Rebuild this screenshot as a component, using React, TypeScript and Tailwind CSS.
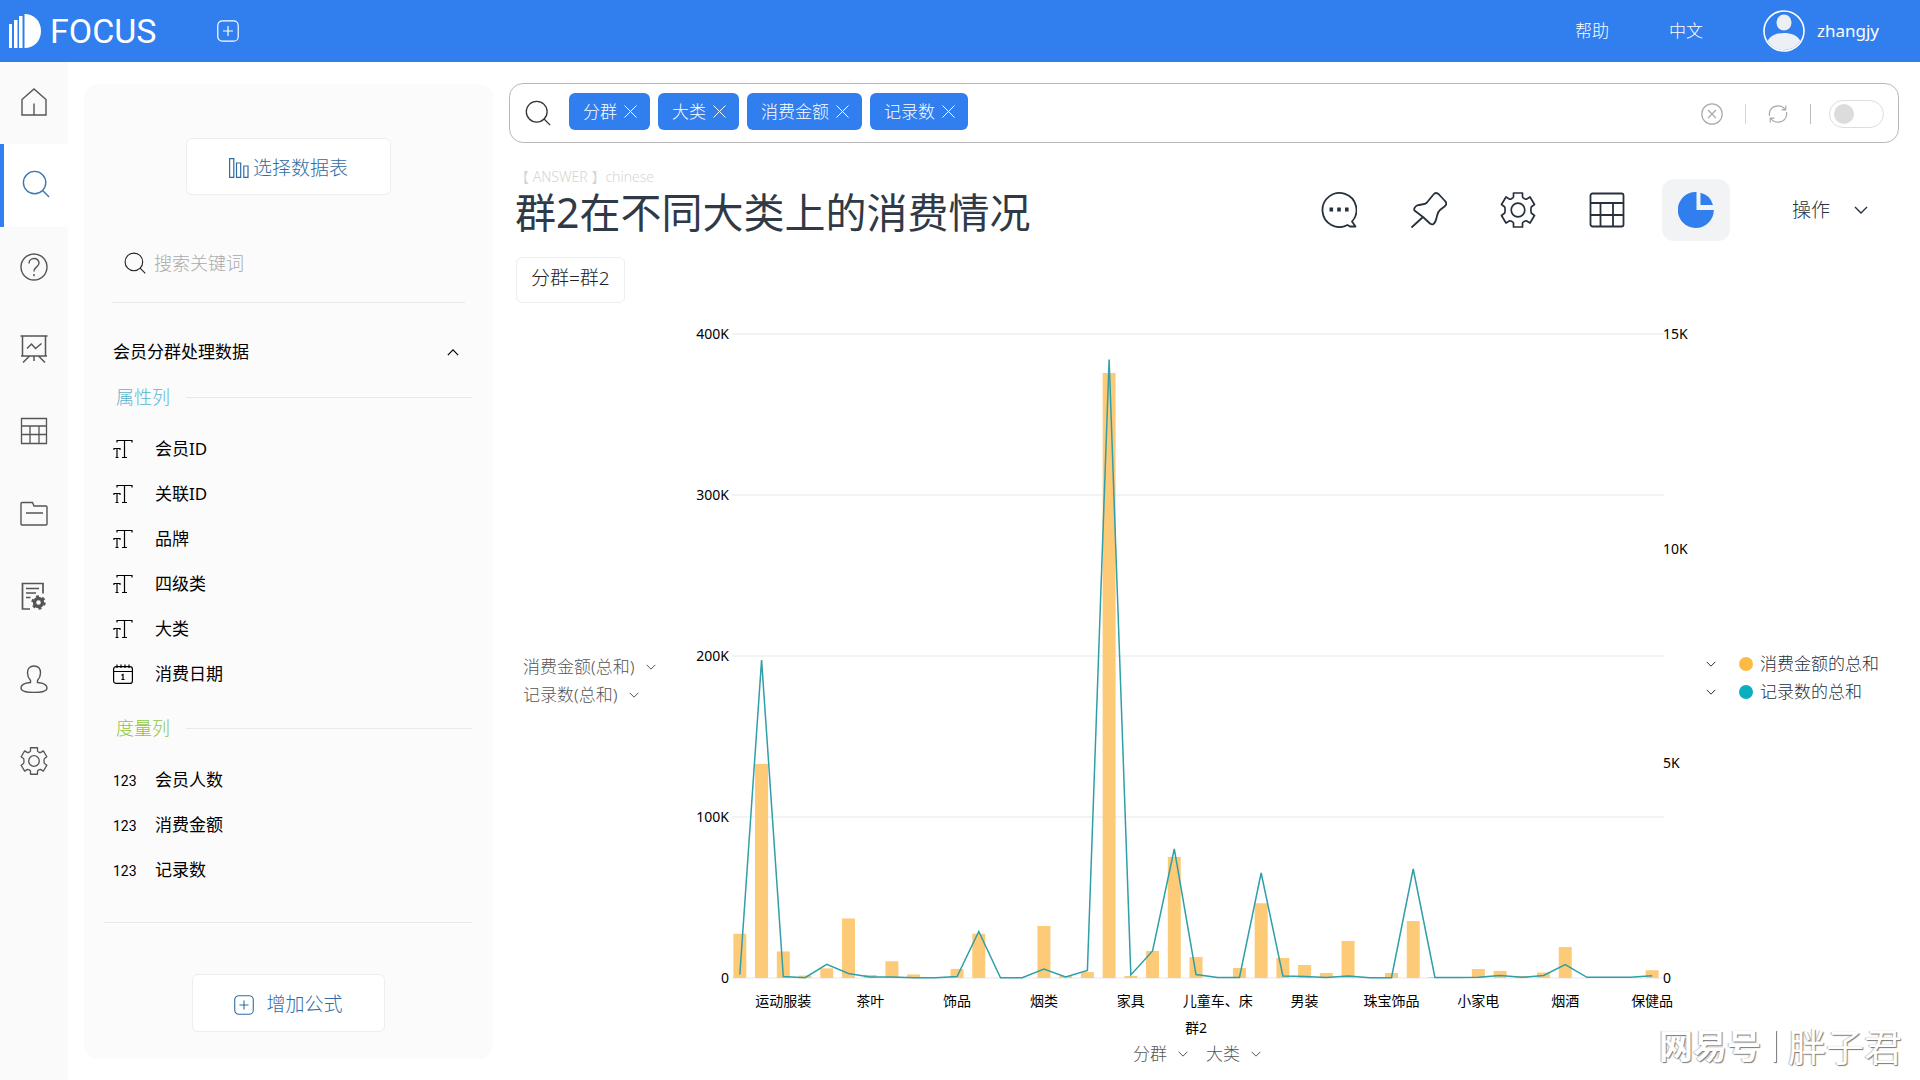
import type { ReactNode } from "react"

type IconProps = { className?: string }

// valores en miles, una barra por categoria
const amounts = [
  27.5, 133, 16.5, 1.5, 6, 37, 1.9, 10.4, 2.2, 0, 5.6, 27.5, 0, 0, 32.3, 1.2, 3.7, 375.8, 1.3, 16.8, 75.2, 13, 0, 6.2,
  46.4, 12.4, 8.1, 3.1, 23, 0, 3.1, 35.4, 0.6, 0, 5.6, 4.4, 1.2, 3.4, 19.2, 0, 0, 0, 4.8,
]
const records = [
  82, 7407, 35, 7, 319, 105, 23, 23, 7, 7, 35, 1083, 7, 7, 210, 23, 175, 14406, 70, 629, 3005, 82, 12, 12, 2446, 46, 35,
  12, 46, 7, 7, 2539, 12, 12, 16, 58, 16, 58, 314, 16, 16, 16, 54,
]
const categories = ["运动服装", "茶叶", "饰品", "烟类", "家具", "儿童车、床", "男装", "珠宝饰品", "小家电", "烟酒", "保健品"]

const attributes = ["会员ID", "关联ID", "品牌", "四级类", "大类"]
const measures = ["会员人数", "消费金额", "记录数"]
const chips = ["分群", "大类", "消费金额", "记录数"]

function SearchIcon({ className }: IconProps) {
  return (
    <svg className={className} viewBox="0 0 30 30" fill="none" stroke="currentColor" strokeWidth="1.5">
      <circle cx="13.5" cy="13.5" r="12" />
      <path d="M22 22l7 7" />
    </svg>
  )
}

function Chevron({ className }: IconProps) {
  return (
    <svg className={className} viewBox="0 0 14 8" fill="none" stroke="currentColor" strokeWidth="1.4">
      <path d="M1 1l6 6 6-6" />
    </svg>
  )
}

function PlusSquare({ className }: IconProps) {
  return (
    <svg className={className} viewBox="0 0 22 22" fill="none" stroke="currentColor" strokeWidth="1.2">
      <rect x="0.8" y="0.8" width="20.4" height="20.4" rx="4.5" />
      <path d="M11 6v10M6 11h10" />
    </svg>
  )
}

function GearIcon({ className }: IconProps) {
  return (
    <svg className={className} viewBox="0 0 36 36" fill="none" stroke="currentColor" strokeWidth="1.7" strokeLinejoin="round">
      <path d="M13.500 1h9v4c0 .8 3 2.500 3.800 2.200l3.700-2.200 4.500 7.500-3 2.200c-.8.600-.8 6 0 6.600l3 2.200-4.500 7.500-3.700-2.200c-.8-.3-3.800 1.400-3.800 2.200v4h-9v-4c0-.8-3-2.500-3.800-2.200L6 31l-4.500-7.500 3-2.200c.8-.6.8-6 0-6.600l-3-2.200L6 5l3.700 2.200c.8.3 3.800-1.400 3.800-2.200z" />
      <circle cx="18" cy="18" r="6.8" />
    </svg>
  )
}

function TextTypeIcon() {
  return (
    <svg className="h-5 w-5" viewBox="0 0 20 20" fill="none" stroke="currentColor" strokeWidth="1.2">
      <path d="M4 3.5v-2h15v2M11.5 1.5v17M9 18.5h5" />
      <path d="M1 11V9.5h6V11M4 9.5v9M2.5 18.5h3" />
    </svg>
  )
}

function CalendarIcon() {
  return (
    <svg className="h-5 w-5" viewBox="0 0 20 20" fill="none" stroke="currentColor" strokeWidth="1.2">
      <rect x="0.6" y="2.6" width="18.800" height="16.800" rx="2.5" />
      <path d="M1 7.500h18M4 0.500v3.500M8 0.500v3.500M12 0.500v3.500M16 0.500v3.500M8.500 11.200l1.500-.8v5M8.500 15.500h3" />
    </svg>
  )
}

const railIcons: { label: string; icon: ReactNode }[] = [
  {
    label: "首页",
    icon: (
      <svg className="h-7 w-7" viewBox="0 0 28 28" fill="none" stroke="currentColor" strokeWidth="1.4">
        <path d="M2 27V11.5L14 1l12 10.5V27zM14 15.5V27" />
      </svg>
    ),
  },
  { label: "搜索", icon: <SearchIcon className="ml-1 h-7 w-7" /> },
  {
    label: "帮助",
    icon: (
      <svg className="h-7 w-7" viewBox="0 0 28 28" fill="none" stroke="currentColor" strokeWidth="1.4">
        <circle cx="14" cy="14" r="13" />
        <path d="M9 10.5c0-6.5 10-6.5 10-.5 0 4-5 3.800-5 8.500M14 21v2.200" />
      </svg>
    ),
  },
  {
    label: "看板",
    icon: (
      <svg className="h-7 w-7" viewBox="0 0 28 28" fill="none" stroke="currentColor" strokeWidth="1.5">
        <path d="M0.500 1h27M2.500 1v20h23V1M1 21h26M9.500 21L3 27.500M18.500 21l6.500 6.500M14 21v5" />
        <path d="M7 13.500l4.500-4.500 4 4.500 6-5" />
      </svg>
    ),
  },
  {
    label: "数据表",
    icon: (
      <svg className="h-7 w-7" viewBox="0 0 28 28" fill="none" stroke="currentColor" strokeWidth="1.3">
        <path d="M1.500 1.500h25v25h-25zM1.500 9h25M1.500 17.500h25M10 9v17.500M19 9v17.500" />
      </svg>
    ),
  },
  {
    label: "文件夹",
    icon: (
      <svg className="h-7 w-7" viewBox="0 0 28 28" fill="none" stroke="currentColor" strokeWidth="1.4">
        <path d="M2 2.500h10.500l1.500 3.500h12q1 0 1 1v17q0 1-1 1H2q-1 0-1-1v-20.500q0-1 1-1zM6 13h17" />
      </svg>
    ),
  },
  {
    label: "任务",
    icon: (
      <svg className="h-7 w-7" viewBox="0 0 28 28" fill="none" stroke="currentColor" strokeWidth="1.7">
        <path d="M10 27H2.500V1.500h20.500v10M6 6.500h13M6 11h10M6 15.500h4.500" />
        <circle cx="18.500" cy="20.500" r="4" strokeWidth="3.4" />
        <circle cx="18.500" cy="20.500" r="6.200" strokeWidth="2" strokeDasharray="3 3.49" />
      </svg>
    ),
  },
  {
    label: "用户",
    icon: (
      <svg className="h-7 w-7" viewBox="0 0 28 28" fill="none" stroke="currentColor" strokeWidth="1.4">
        <path d="M14 1C9.500 1 7.500 4 7.500 8c0 3.500 1.200 5.500 3 7.500v2C5 18 1 20 1 23c0 3 6 4.500 13 4.500S27 26 27 23c0-3-4-5-9.500-5.500v-2c1.800-2 3-4 3-7.500 0-4-2-7-6.500-7z" />
      </svg>
    ),
  },
  { label: "设置", icon: <GearIcon className="h-7 w-7" /> },
]

function Header() {
  return (
    <header className="flex h-[62px] items-center border-b border-[#4479c4] bg-[#317eee] text-white">
      <a href="#" className="flex items-center pl-2">
        <svg className="h-[34px] w-[34px]" viewBox="0 0 34 34" fill="currentColor">
          <path d="M1 10h3v24H1zM6 6h3.500v28H6zM11 2h3.500v32H11z" />
          <path d="M16.500 0C26 0 33 7 33 17s-7 17-16.500 17z" />
        </svg>
        <span className="ml-2 font-[Roboto] text-[34px] leading-[40px]">FOCUS</span>
      </a>
      <button aria-label="新建" className="ml-[60px]">
        <PlusSquare className="h-[22px] w-[22px]" />
      </button>
      <nav className="ml-auto flex items-center pr-[41px] text-[17px] font-light">
        <a href="#">帮助</a>
        <a href="#" className="ml-[60px]">
          中文
        </a>
        <a href="#" className="ml-[60px] flex items-center gap-3 font-normal">
          <svg className="h-[42px] w-[42px]" viewBox="0 0 42 42">
            <circle cx="21" cy="21" r="20" fill="none" stroke="#fff" strokeWidth="1.6" />
            <ellipse cx="21" cy="12.5" rx="7.500" ry="8" fill="#eceff3" />
            <path d="M4.500 31C8 25 14 23 21 23s13 2 16.500 8A19.500 19.500 0 0 1 4.500 31z" fill="#eceff3" />
          </svg>
          zhangjy
        </a>
      </nav>
    </header>
  )
}

function Rail() {
  return (
    <aside className="w-[68px] shrink-0 bg-[#fafafa]">
      <nav className="flex h-[742px] flex-col">
        {railIcons.map((item, i) => (
          <a
            key={item.label}
            href="#"
            aria-label={item.label}
            className={
              i === 1
                ? "flex flex-1 items-center justify-center border-l-4 border-[#317eee] bg-white pr-1 pb-[3px] text-[#3b77b5]"
                : "flex flex-1 items-center justify-center pb-[3px] text-[#555]"
            }
          >
            {item.icon}
          </a>
        ))}
      </nav>
    </aside>
  )
}

function GroupTitle({ text, color }: { text: string; color: string }) {
  return (
    <div className="mr-[21px] ml-8 flex h-12 items-center gap-4">
      <h3 className={`text-[18px] font-light ${color}`}>{text}</h3>
      <div className="flex-1 border-t border-[#e9e9e9]" />
    </div>
  )
}

function Field({ icon, text }: { icon: ReactNode; text: string }) {
  return (
    <li className="flex h-[45px] items-center pl-[29px]">
      <span className="w-[42px]">{icon}</span>
      <span className="text-[17px]">{text}</span>
    </li>
  )
}

function DataPanel() {
  return (
    <section className="mt-[22px] ml-4 flex w-[409px] shrink-0 flex-col self-start rounded-[14px] bg-[#fbfbfb] pt-[54px] pb-[27px] text-black">
      <button className="flex h-[57px] w-[205px] items-center justify-center gap-1 self-center rounded-md border border-[#eee] bg-white pt-[3px] text-[19px] font-light text-[#2f6ca5]">
        <svg className="h-5 w-5" viewBox="0 0 20 20" fill="none" stroke="currentColor" strokeWidth="1.2">
          <path d="M0.600 0.600h4.200v18.800H0.600zM7.500 5h4.200v14.400H7.500zM14.800 8h4.200v11.400h-4.200z" />
        </svg>
        选择数据表
      </button>

      <label className="mx-7 mt-[29px] flex h-[79px] items-center gap-2 border-b border-[#e9e9e9] pl-3">
        <SearchIcon className="h-[22px] w-[22px] text-[#222]" />
        <input
          aria-label="搜索关键词"
          placeholder="搜索关键词"
          className="min-w-0 flex-1 bg-transparent text-[18px] font-light outline-none placeholder:text-[#aaa]"
        />
      </label>

      <button className="mt-7 mr-[34px] ml-[29px] flex h-[42px] items-center justify-between text-[17px]">
        会员分群处理数据
        <Chevron className="h-[7px] w-3 rotate-180" />
      </button>

      <GroupTitle text="属性列" color="text-[#5cb3cc]" />
      <ul className="mt-[5px]">
        {attributes.map((a) => (
          <Field key={a} icon={<TextTypeIcon />} text={a} />
        ))}
        <Field icon={<CalendarIcon />} text="消费日期" />
      </ul>

      <div className="mt-2">
        <GroupTitle text="度量列" color="text-[#8cc540]" />
      </div>
      <ul className="mt-[5px]">
        {measures.map((m) => (
          <Field key={m} icon={<span className="font-[Roboto] text-[14px]">123</span>} text={m} />
        ))}
      </ul>

      <div className="mt-[30px] mr-[21px] ml-5 border-t border-[#e9e9e9]" />
      <button className="mt-[51px] flex h-[58px] w-[193px] items-center justify-center gap-3 self-center rounded-md border border-[#eee] bg-white pt-[3px] text-[19px] font-light text-[#2f6ca5]">
        <PlusSquare className="h-5 w-5" />
        增加公式
      </button>
    </section>
  )
}

function SearchBar() {
  return (
    <div className="flex h-[60px] items-center rounded-[14px] border border-[#b8b8b8] pr-[14px] pl-[15px]">
      <SearchIcon className="h-[26px] w-[26px] text-[#333]" />
      <div className="ml-[18px] flex gap-2 pb-1">
        {chips.map((c) => (
          <span key={c} className="flex h-[37px] items-center gap-[7px] rounded-md bg-[#317eee] pr-[13px] pl-[14px] text-[17px] font-light text-white">
            <span className="pt-[2px]">{c}</span>
            <button aria-label={`移除${c}`}>
              <svg className="h-[13px] w-[13px]" viewBox="0 0 13 13" stroke="currentColor" strokeWidth="1">
                <path d="M0.500 0.500l12 12M12.500 0.500l-12 12" />
              </svg>
            </button>
          </span>
        ))}
      </div>
      <input aria-label="搜索" className="mx-2 h-8 min-w-0 flex-1 outline-none" />
      <div className="flex items-center gap-[22px] pt-[2px] text-[#aaa]">
        <button aria-label="清空">
          <svg className="h-[22px] w-[22px]" viewBox="0 0 22 22" fill="none" stroke="currentColor" strokeWidth="1.2">
            <circle cx="11" cy="11" r="10.200" />
            <path d="M7 7l8 8M15 7l-8 8" />
          </svg>
        </button>
        <span className="h-5 border-l border-[#d5d5d5]" />
        <button aria-label="刷新">
          <svg className="h-5 w-5" viewBox="0 0 20 20" fill="none" stroke="currentColor" strokeWidth="1.2">
            <path d="M1.500 12C0.500 6 4.500 1.800 10 1.800c3 0 5.500 1.200 7 3.700M18.500 8c1 6-3 10.200-8.500 10.200-3 0-5.500-1.200-7-3.700M17.800 1.500v4.300h-4.300M2.200 18.500v-4.300h4.300" />
          </svg>
        </button>
        <span className="h-5 border-l border-[#bbb]" />
        <label className="-ml-1 flex h-7 w-[55px] items-center rounded-full border border-[#ddd] pl-1">
          <input type="checkbox" role="switch" aria-label="切换" className="peer sr-only" />
          <span className="h-5 w-5 rounded-full bg-[#dcdcdc] peer-checked:translate-x-6 peer-checked:bg-[#317eee]" />
        </label>
      </div>
    </div>
  )
}

function Toolbar() {
  return (
    <div className="flex items-center pr-[31px] text-[#26313d]">
      <button aria-label="评论">
        <svg className="h-9 w-9" viewBox="0 0 36 36" fill="none" stroke="currentColor" strokeWidth="1.8">
          <path d="M31 29.500A17 17 0 1 0 26.500 33l2.500 1.500h5.500z" strokeLinejoin="round" />
          <path d="M8.500 17.500h3.600M16.200 17.500h3.600M24 17.500h3.600" strokeWidth="3.8" />
        </svg>
      </button>
      <button aria-label="固定" className="ml-[54px]">
        <svg className="h-9 w-9" viewBox="0 0 36 36" fill="none" stroke="currentColor" strokeWidth="1.8" strokeLinejoin="round" strokeLinecap="round">
          <path d="M1 35l11-10M12 25L3.500 18.500c-1-1.500.5-4 2.500-5 3.500-1.500 7.500-.5 9.500-2.500L22.500 2.500c1.500-2 3.500-2 5.500 0l6 6.500c2 2 1.500 4-.5 5.500L29 18c-2.500 2-2.500 4.500-3.500 8-.6 2.500-1.500 5-3 6-1 .7-2.500.2-3.500-.5z" />
        </svg>
      </button>
      <button aria-label="设置" className="ml-[53px]">
        <GearIcon className="h-9 w-9" />
      </button>
      <button aria-label="表格" className="ml-[53px]">
        <svg className="h-9 w-9" viewBox="0 0 36 36" fill="none" stroke="currentColor" strokeWidth="1.8">
          <rect x="1.500" y="1.500" width="33" height="33" rx="2" />
          <path d="M1.500 11h33M1.500 23h33M11.500 11v23.500M24 11v23.500" />
        </svg>
      </button>
      <button aria-label="图表" className="ml-[37px] flex h-[62px] w-[68px] items-center justify-center rounded-[12px] bg-[#f1f3f4]">
        <svg className="h-9 w-9" viewBox="0 0 36 36" fill="#317eee">
          <path d="M18.500 0.500v17.500h17.300A18 18 0 1 1 18.500 0z" />
          <path d="M22.500 0.800A17 17 0 0 1 35 13H22.500z" />
        </svg>
      </button>
      <button className="ml-[62px] flex items-center gap-6 text-[19px] font-light">
        操作
        <Chevron className="h-2 w-[14px]" />
      </button>
    </div>
  )
}

function AxisSelect({ label }: { label: string }) {
  return (
    <span className="flex h-7 items-center gap-[11px] text-[#555]">
      <select aria-label={label} className="appearance-none bg-transparent text-[17px] font-light outline-none">
        <option>{label}</option>
      </select>
      <Chevron className="h-[6px] w-[10px]" />
    </span>
  )
}

// 43 bandas de 39 a 973, base en y=658
const STEP = 934 / 43
const BASE = 658
const TOP = 14
const cx = (i: number) => 39 + STEP * (i + 0.5)

function Chart() {
  const line = records.map((v, i) => `${cx(i)},${BASE - (v / 15000) * (BASE - TOP)}`).join(" ")
  return (
    <svg className="block h-auto w-full text-[14px]" viewBox="0 0 1000 720">
      {[0, 100, 200, 300, 400].map((v) => {
        const y = BASE - (v / 400) * (BASE - TOP)
        return (
          <g key={v}>
            <line x1="42" x2="974" y1={y} y2={y} stroke="#efefef" strokeWidth="1.5" />
            <text x="39" y={y + 5} textAnchor="end">
              {v ? `${v}K` : "0"}
            </text>
          </g>
        )
      })}
      {[0, 5, 10, 15].map((v) => (
        <text key={v} x="973" y={BASE - (v / 15) * (BASE - TOP) + 5}>
          {v ? `${v}K` : "0"}
        </text>
      ))}
      {amounts.map((v, i) => {
        const h = (v / 400) * (BASE - TOP)
        return <rect key={i} x={cx(i) - 6.5} y={BASE - h} width="13" height={h} fill="#fdca78" />
      })}
      <polyline points={line} fill="none" stroke="#2f9fa8" strokeWidth="1.5" />
      {categories.map((c, i) => (
        <text key={c} x={cx(2 + i * 4)} y="686" textAnchor="middle">
          {c}
        </text>
      ))}
      <text x="506" y="713" textAnchor="middle">
        群2
      </text>
    </svg>
  )
}

function Legend() {
  const items = [
    { text: "消费金额的总和", color: "bg-[#fdbb45]" },
    { text: "记录数的总和", color: "bg-[#0aafbf]" },
  ]
  return (
    <ul className="w-[209px] shrink-0 pb-8 pl-4 text-[17px] font-light text-[#26313d]">
      {items.map((it) => (
        <li key={it.text} className="flex h-7 items-center">
          <button aria-label={it.text}>
            <Chevron className="h-[6px] w-[10px]" />
          </button>
          <span className={`ml-[23px] h-[14px] w-[14px] rounded-full ${it.color}`} />
          <span className="ml-[7px]">{it.text}</span>
        </li>
      ))}
    </ul>
  )
}

export default function App() {
  return (
    <div className="relative flex min-h-screen flex-col bg-white font-['Noto_Sans','Noto_Sans_CJK_SC',sans-serif]">
      <Header />
      <div className="flex flex-1">
        <Rail />
        <DataPanel />

        {/* contenido principal */}
        <main className="mr-[21px] ml-4 min-w-0 flex-1 pt-[21px]">
          <SearchBar />
          <div className="mt-6 flex items-end justify-between">
            <div className="pb-1 pl-[6px]">
              <p className="text-[14px] leading-5 font-light text-[#d5d5d5]">【 ANSWER 】chinese</p>
              <h1 className="text-[41px] leading-[50px] text-[#2f3a46]">群2在不同大类上的消费情况</h1>
            </div>
            <Toolbar />
          </div>
          <div className="mt-4 ml-[7px] h-[46px] w-fit rounded-md border border-[#eee] px-[14px] text-[19px] leading-[40px] font-light text-[#222]">
            分群=群2
          </div>

          <div className="mt-[17px] flex items-center">
            <div className="w-[181px] shrink-0 pb-[26px] pl-[14px]">
              <AxisSelect label="消费金额(总和)" />
              <AxisSelect label="记录数(总和)" />
            </div>
            <div className="min-w-0 flex-1">
              <Chart />
              <div className="flex justify-center gap-[18px] pl-[14px]">
                <AxisSelect label="分群" />
                <AxisSelect label="大类" />
              </div>
            </div>
            <Legend />
          </div>
        </main>
      </div>

      {/* marca de agua */}
      <div className="absolute right-[18px] bottom-[10px] flex items-center gap-3 text-white [text-shadow:1px_1px_1px_#777,-1px_0_1px_#bbb]">
        <span className="text-[34px] leading-[48px] font-bold">网易号</span>
        <span className="h-8 w-[3px] bg-white shadow-[1px_1px_1px_#777]" />
        <span className="text-[38px] leading-[48px]">胖子君</span>
      </div>
    </div>
  )
}
